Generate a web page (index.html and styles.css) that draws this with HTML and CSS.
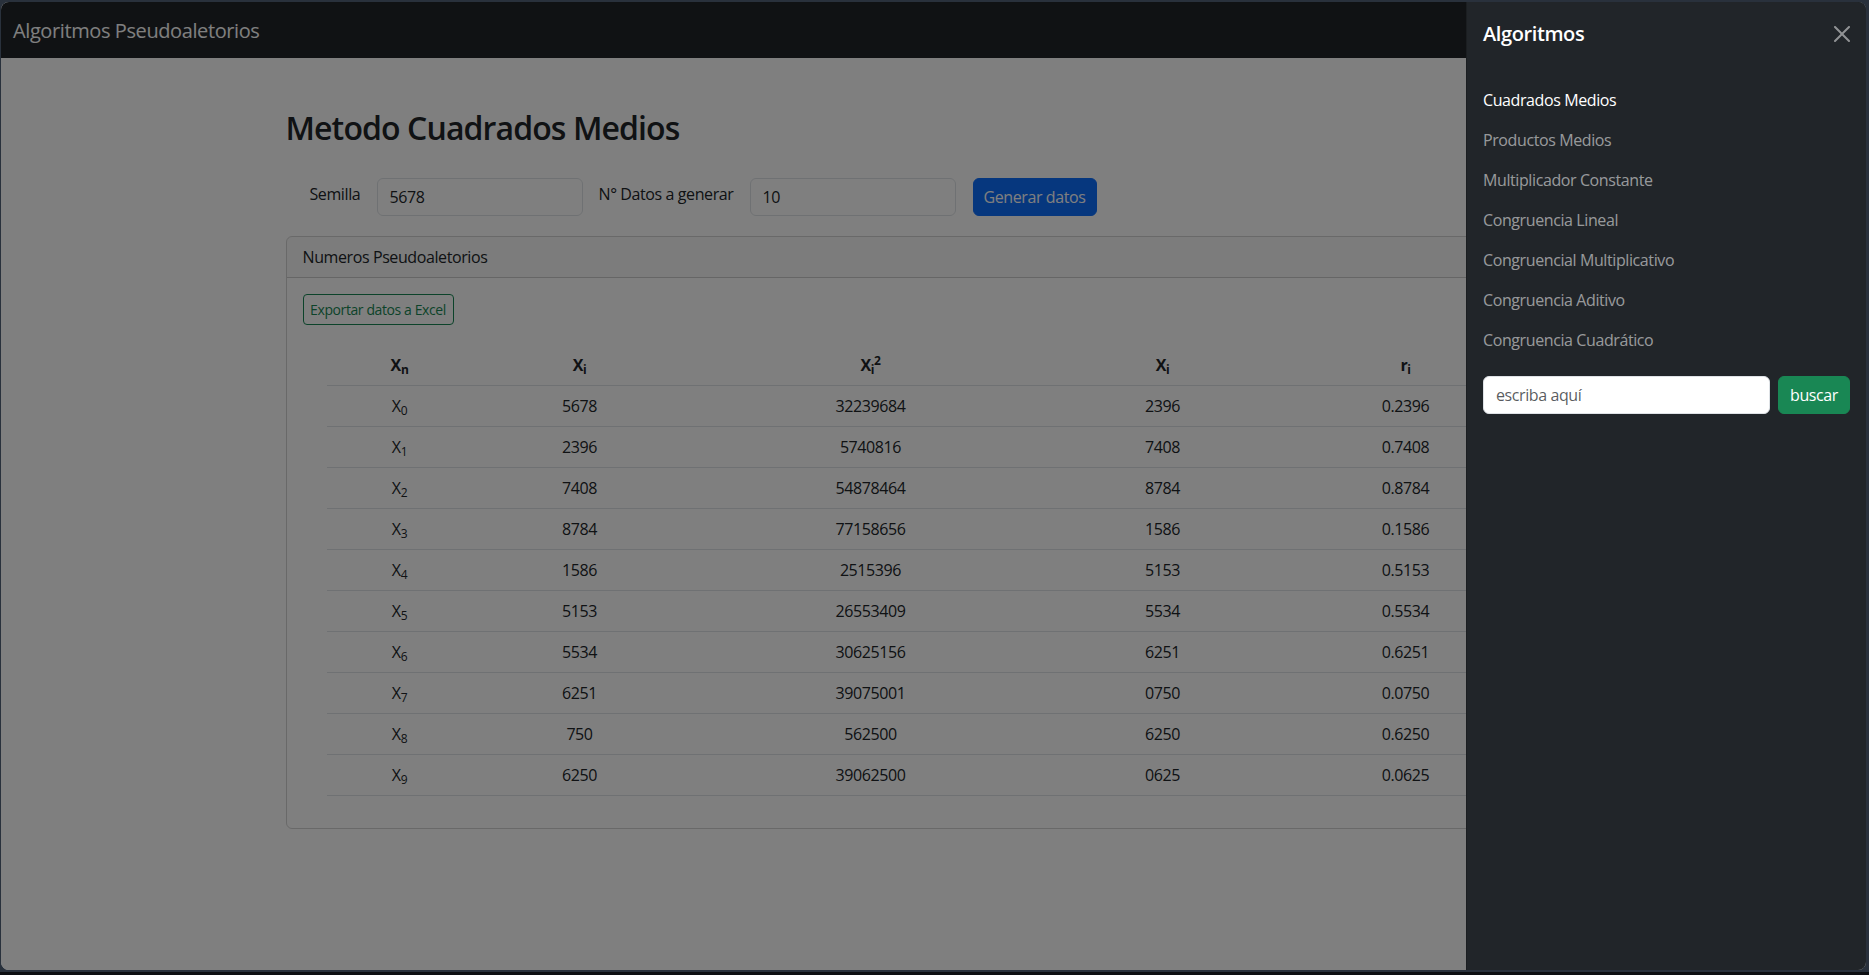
FILE: index.html
```html
<!DOCTYPE html>
<html lang="es">
<head>
<meta charset="utf-8">
<title>Algoritmos Pseudoaletorios</title>
<link rel="stylesheet" href="styles.css">
</head>
<body>
<div class="window">
  <nav class="navbar">
    <span class="brand">Algoritmos Pseudoaletorios</span>
  </nav>
  <main class="container">
    <h2 class="title">Metodo Cuadrados Medios</h2>
    <form class="gen-form">
      <label class="form-label label-seed">Semilla</label>
      <input class="form-control" type="text" value="5678">
      <label class="form-label label-count">N° Datos a generar</label>
      <input class="form-control" type="text" value="10">
      <button class="btn btn-primary" type="button">Generar datos</button>
    </form>
    <section class="card">
      <div class="card-header">Numeros Pseudoaletorios</div>
      <div class="card-body">
        <button class="btn btn-outline-success btn-sm" type="button">Exportar datos a Excel</button>
        <table class="table">
          <colgroup>
            <col class="c1"><col class="c2"><col class="c3"><col class="c4"><col class="c5">
          </colgroup>
          <thead>
            <tr><th>X<sub>n</sub></th><th>X<sub>i</sub></th><th>X<sub>i</sub><sup>2</sup></th><th>X<sub>i</sub></th><th>r<sub>i</sub></th></tr>
          </thead>
          <tbody>
            <tr><td>X<sub>0</sub></td><td>5678</td><td>32239684</td><td>2396</td><td>0.2396</td></tr>
            <tr><td>X<sub>1</sub></td><td>2396</td><td>5740816</td><td>7408</td><td>0.7408</td></tr>
            <tr><td>X<sub>2</sub></td><td>7408</td><td>54878464</td><td>8784</td><td>0.8784</td></tr>
            <tr><td>X<sub>3</sub></td><td>8784</td><td>77158656</td><td>1586</td><td>0.1586</td></tr>
            <tr><td>X<sub>4</sub></td><td>1586</td><td>2515396</td><td>5153</td><td>0.5153</td></tr>
            <tr><td>X<sub>5</sub></td><td>5153</td><td>26553409</td><td>5534</td><td>0.5534</td></tr>
            <tr><td>X<sub>6</sub></td><td>5534</td><td>30625156</td><td>6251</td><td>0.6251</td></tr>
            <tr><td>X<sub>7</sub></td><td>6251</td><td>39075001</td><td>0750</td><td>0.0750</td></tr>
            <tr><td>X<sub>8</sub></td><td>750</td><td>562500</td><td>6250</td><td>0.6250</td></tr>
            <tr><td>X<sub>9</sub></td><td>6250</td><td>39062500</td><td>0625</td><td>0.0625</td></tr>
          </tbody>
        </table>
      </div>
    </section>
  </main>
  <div class="backdrop"></div>
  <aside class="offcanvas">
    <div class="offcanvas-header">
      <h5 class="offcanvas-title">Algoritmos</h5>
      <button class="btn-close" type="button" aria-label="Close">
        <svg viewBox="0 0 16 16" width="16" height="16"><path fill="#fff" d="M.293.293a1 1 0 0 1 1.414 0L8 6.586 14.293.293a1 1 0 1 1 1.414 1.414L9.414 8l6.293 6.293a1 1 0 0 1-1.414 1.414L8 9.414l-6.293 6.293a1 1 0 0 1-1.414-1.414L6.586 8 .293 1.707a1 1 0 0 1 0-1.414z"/></svg>
      </button>
    </div>
    <div class="offcanvas-body">
      <ul class="nav">
        <li><a class="nav-link active">Cuadrados Medios</a></li>
        <li><a class="nav-link">Productos Medios</a></li>
        <li><a class="nav-link">Multiplicador Constante</a></li>
        <li><a class="nav-link">Congruencia Lineal</a></li>
        <li><a class="nav-link">Congruencial Multiplicativo</a></li>
        <li><a class="nav-link">Congruencia Aditivo</a></li>
        <li><a class="nav-link">Congruencia Cuadrático</a></li>
      </ul>
      <form class="search">
        <input class="form-control search-input" type="search" placeholder="escriba aquí">
        <button class="btn btn-success" type="button">buscar</button>
      </form>
    </div>
  </aside>
</div>
</body>
</html>
```

FILE: styles.css
```css
html, body {
  margin: 0;
  padding: 0;
}
body {
  height: 975px;
  overflow: hidden;
  background: linear-gradient(#29313c 0 972px, #0d0f12 972px);
}
.window {
  position: relative;
  margin: 2px 0 0 1px;
  width: 1865px;
  height: 968px;
  border-radius: 8px;
  overflow: hidden;
  background: #fff;
  font-family: "Open Sans", "Noto Sans", sans-serif;
  font-size: 16px;
  line-height: 1.5;
  letter-spacing: -0.4px;
  color: #212529;
}
.navbar {
  height: 56px;
  box-sizing: border-box;
  background: #212529;
  display: flex;
  align-items: center;
  padding: 2px 12px 0;
}
.brand {
  font-size: 20px;
  line-height: 30px;
  color: #fff;
}
.container {
  width: 1320px;
  box-sizing: border-box;
  margin: 51px auto 0;
  padding: 0 12px;
}
.title {
  margin: 0;
  font-size: 32px;
  font-weight: 600;
  letter-spacing: -0.9px;
  line-height: 1.2;
}
.gen-form {
  display: flex;
  align-items: flex-start;
  margin-top: 31px;
  padding-left: 24px;
}
.form-label {
  padding-top: 4px;
  line-height: 24px;
  white-space: nowrap;
}
.label-seed { width: 67px; }
.label-count { width: 151px; margin-left: 16px; }
.form-control {
  box-sizing: border-box;
  height: 38px;
  padding: 6px 12px;
  font: inherit;
  letter-spacing: inherit;
  color: #212529;
  background: #fff;
  border: 1px solid #dee2e6;
  border-radius: 6px;
  outline: none;
}
.gen-form .form-control { width: 206px; }
.btn {
  box-sizing: border-box;
  font: inherit;
  letter-spacing: inherit;
  white-space: nowrap;
  border: 1px solid transparent;
  border-radius: 6px;
  padding: 6px 12px;
  line-height: 24px;
  cursor: pointer;
}
.btn-primary {
  margin-left: 17px;
  width: 124px;
  height: 38px;
  padding: 6px 0;
  color: #fff;
  background: #0d6efd;
  border-color: #0d6efd;
}
.card {
  margin-top: 20px;
  border: 1px solid rgba(0, 0, 0, 0.175);
  border-radius: 6px;
}
.card-header {
  padding: 8px 16px;
  background: rgba(33, 37, 41, 0.03);
  border-bottom: 1px solid rgba(0, 0, 0, 0.175);
  border-radius: 5px 5px 0 0;
}
.card-body {
  padding: 16px;
}
.btn-outline-success {
  color: #198754;
  background: transparent;
  border-color: #198754;
}
.btn-sm {
  display: block;
  width: 151px;
  height: 31px;
  padding: 4px 0;
  font-size: 14px;
  line-height: 21px;
  border-radius: 4px;
}
.table {
  width: calc(100% - 48px);
  margin: 20px 24px 16px;
  border-collapse: collapse;
  table-layout: fixed;
}
.c1 { width: 146px; }
.c2 { width: 214px; }
.c3 { width: 368px; }
.c4 { width: 216px; }
.c5 { width: 270px; }
.table th, .table td {
  padding: 8px;
  text-align: center;
  border-bottom: 1px solid #dee2e6;
  line-height: 24px;
}
.table th { font-weight: 700; }
sub, sup {
  position: relative;
  font-size: 0.75em;
  line-height: 0;
  vertical-align: baseline;
}
sub { bottom: -0.25em; }
sup { top: -0.5em; }
.backdrop {
  position: absolute;
  inset: 0;
  background: rgba(0, 0, 0, 0.5);
}
.offcanvas {
  position: absolute;
  top: 0;
  right: 0;
  bottom: 0;
  width: 400px;
  box-sizing: border-box;
  background: #212529;
  border-left: 1px solid rgba(0, 0, 0, 0.175);
  color: #fff;
}
.offcanvas-header {
  display: flex;
  align-items: center;
  justify-content: space-between;
  padding: 16px;
}
.offcanvas-title {
  margin: 0;
  padding-top: 1px;
  font-size: 20px;
  line-height: 30px;
  font-weight: 600;
}
.btn-close {
  display: flex;
  padding: 0;
  border: 0;
  background: transparent;
  opacity: 0.5;
  cursor: pointer;
}
.offcanvas-body {
  padding: 15px 16px 16px;
}
.nav {
  list-style: none;
  margin: 0;
  padding: 0;
}
.nav-link {
  display: block;
  padding: 8px 0;
  color: rgba(255, 255, 255, 0.55);
  text-decoration: none;
}
.nav-link.active { color: #fff; }
.search {
  display: flex;
  margin-top: 16px;
}
.search-input {
  flex: 1;
  min-width: 0;
  margin-right: 8px;
}
.search-input::placeholder { color: rgba(33, 37, 41, 0.75); }
.btn-success {
  width: 72px;
  height: 38px;
  padding: 6px 0;
  color: #fff;
  background: #198754;
  border-color: #198754;
}
```
